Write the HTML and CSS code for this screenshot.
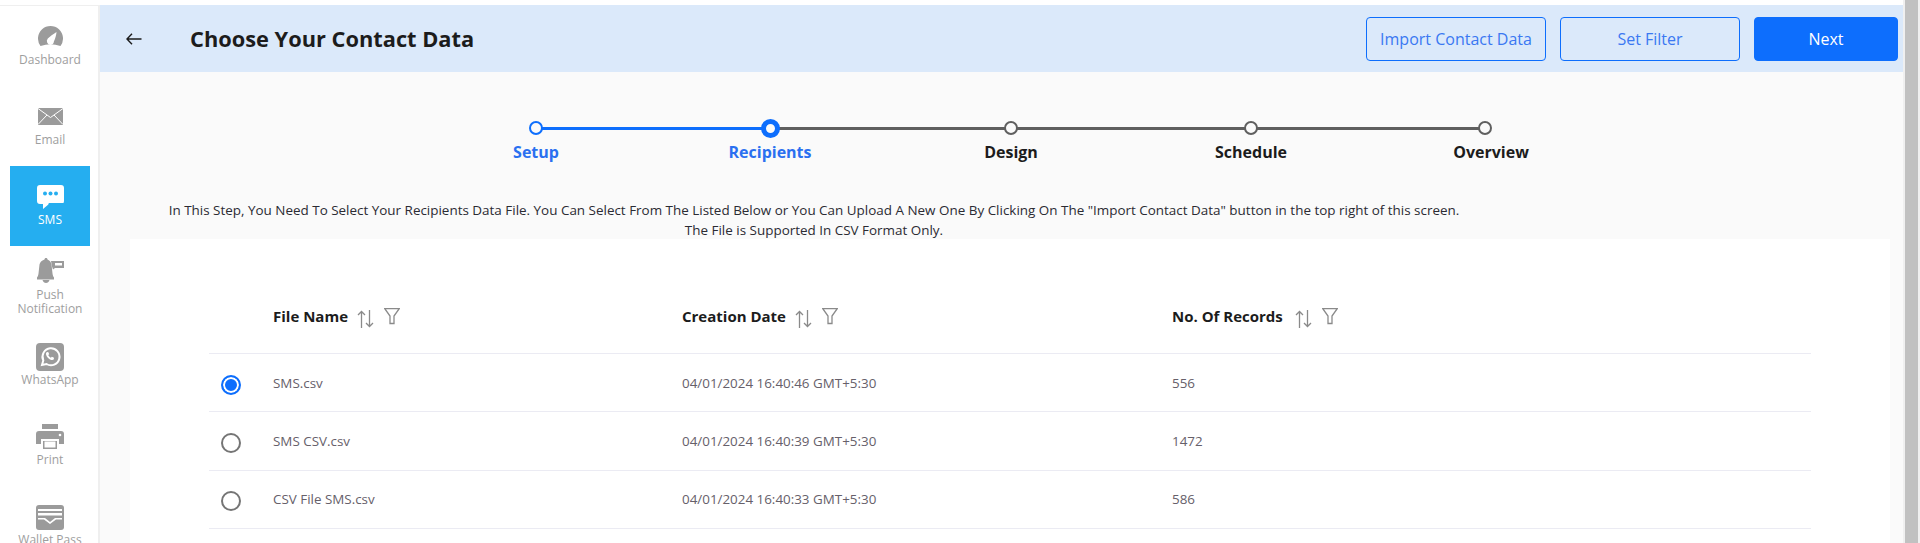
FILE: index.html
```html
<!DOCTYPE html>
<html lang="en">
<head>
<meta charset="utf-8">
<title>Choose Your Contact Data</title>
<link rel="stylesheet" href="styles.css">
</head>
<body>
<div class="app">
  <nav class="sidebar">
    <a class="nav-item nav-dash">
      <svg class="nav-icon" width="25" height="20" viewBox="0 0 25 20"><path fill="#9b9b9b" d="M2.500 20A12.500 12.500 0 1 1 22.500 20Q12.500 16.500 2.500 20z"/><path fill="#fff" d="M18.500 6c-.2 3-1 5.800-2.600 9.500a3.800 3.800 0 0 1-3.500 3.400 3.800 3.800 0 0 1-2.600-6.300C12 10.500 15 8.300 18.500 6z"/></svg>
      <span>Dashboard</span>
    </a>
    <a class="nav-item nav-email">
      <svg class="nav-icon" width="25" height="17" viewBox="0 0 25 17"><rect width="25" height="17" fill="#9b9b9b"/><path fill="none" stroke="#fff" stroke-width="1" d="M0 .5l12.500 9L25 .5M0 16.500l9-9.500M25 16.500l-9-9.500"/></svg>
      <span>Email</span>
    </a>
    <a class="nav-item nav-sms active">
      <svg class="nav-icon" width="27" height="24" viewBox="0 0 27 24"><path fill="#fff" d="M3 0h21a3 3 0 0 1 3 3v13a3 3 0 0 1-3 3H12l-6 5v-5H3a3 3 0 0 1-3-3V3a3 3 0 0 1 3-3z"/><circle cx="8" cy="8.500" r="2" fill="#25aef0"/><circle cx="13.500" cy="8.500" r="2" fill="#25aef0"/><circle cx="19" cy="8.500" r="2" fill="#25aef0"/><path fill="#25aef0" d="M12 18h15v1.400H11z"/></svg>
      <span>SMS</span>
    </a>
    <a class="nav-item nav-push">
      <svg class="nav-icon" width="27" height="25" viewBox="0 0 27 25"><path fill="#9b9b9b" d="M9 0c1 0 1.500.6 1.500 1.500 2.500 1 3.500 2.700 4 5l1 9c.2 2 .8 3 1.500 4v2H0v-2c.7-1 1.300-2 1.500-4l1-9c.5-2.300 2-4 5-5C7.500.6 8 0 9 0zM5.500 22h7c-.5 1.800-2 3-3.500 3s-3-1.200-3.500-3z"/><path fill="#9b9b9b" d="M14 3h13v7H18l-2 1.500-1-3z"/><path fill="#fff" d="M18 5h7v2.500h-7z"/></svg>
      <span>Push Notification</span>
    </a>
    <a class="nav-item nav-whatsapp">
      <svg class="nav-icon" width="28" height="28" viewBox="0 0 28 28"><rect width="28" height="28" rx="4" fill="#9b9b9b"/><path fill="none" stroke="#fff" stroke-width="2" d="M6 22l1.300-4.600A8.500 8.500 0 1 1 10.500 21z"/><path fill="#fff" d="M11 9c-.8.500-1.200 1.500-.9 2.700.6 2.300 2.900 4.600 5.200 5.200 1.300.3 2.200-.1 2.700-1l-.3-1.300-1.900-.8-.9 1c-1.200-.5-2.200-1.500-2.700-2.700l1-.9-.8-1.900z"/></svg>
      <span>WhatsApp</span>
    </a>
    <a class="nav-item nav-print">
      <svg class="nav-icon" width="28" height="25" viewBox="0 0 28 25"><path fill="#9b9b9b" d="M6 0h16v5H6zM3 7h22a3 3 0 0 1 3 3v10h-5v-5H5v5H0V10a3 3 0 0 1 3-3zM7 17h14v8H7z"/><path fill="#fff" d="M8.500 17.500h11v6h-11z"/><circle cx="24" cy="11" r="1.300" fill="#fff"/></svg>
      <span>Print</span>
    </a>
    <a class="nav-item nav-wallet">
      <svg class="nav-icon" width="28" height="25" viewBox="0 0 28 25"><rect width="28" height="25" rx="3" fill="#9b9b9b"/><path fill="#fff" d="M2 4h24v2H2zM2 8h24v2.500H2zM2 13h7l5 4 5-4h7v1.500h-6l-6 4.500-6-4.500H2z"/></svg>
      <span>Wallet Pass</span>
    </a>
  </nav>
  <main class="main">
    <header class="topbar">
      <svg class="back" width="16" height="12" viewBox="0 0 16 12"><path fill="none" stroke="#1c1c1c" stroke-width="1.400" d="M15.500 6H1M6 .8L1 6l5 5.200"/></svg>
      <h1 class="title">Choose Your Contact Data</h1>
      <div class="actions">
        <button class="btn outline">Import Contact Data</button>
        <button class="btn outline">Set Filter</button>
        <button class="btn solid">Next</button>
      </div>
    </header>
    <div class="content">
      <ol class="stepper">
        <li class="step done"><i class="dot"></i><b>Setup</b></li>
        <li class="step current"><i class="dot"></i><b>Recipients</b></li>
        <li class="step"><i class="dot"></i><b>Design</b></li>
        <li class="step short"><i class="dot"></i><b>Schedule</b></li>
        <li class="step last"><i class="dot"></i><b>Overview</b></li>
      </ol>
      <p class="intro">In This Step, You Need To Select Your Recipients Data File. You Can Select From The Listed Below or You Can Upload A New One By Clicking On The "Import Contact Data" button in the top right of this screen.<br>The File is Supported In CSV Format Only.</p>
      <section class="card">
        <div class="row head">
          <div></div>
          <div class="th">File Name
            <svg class="sort" width="17" height="18" viewBox="0 0 17 18"><path fill="none" stroke="#8a8a8a" stroke-width="1.300" d="M4.500 18V1.500M1 5l3.500-3.500L8 5M12.500 0v16.500M9 13l3.500 3.500L16 13"/></svg>
            <svg class="filter" width="16" height="17" viewBox="0 0 16 17"><path fill="none" stroke="#8a8a8a" stroke-width="1.300" d="M.8.700h14.400L10 8v7.500l-4 0V8z"/></svg>
          </div>
          <div class="th">Creation Date
            <svg class="sort" width="17" height="18" viewBox="0 0 17 18"><path fill="none" stroke="#8a8a8a" stroke-width="1.300" d="M4.500 18V1.500M1 5l3.500-3.500L8 5M12.500 0v16.500M9 13l3.500 3.500L16 13"/></svg>
            <svg class="filter" width="16" height="17" viewBox="0 0 16 17"><path fill="none" stroke="#8a8a8a" stroke-width="1.300" d="M.8.700h14.400L10 8v7.500l-4 0V8z"/></svg>
          </div>
          <div class="th th-wide">No. Of Records
            <svg class="sort" width="17" height="18" viewBox="0 0 17 18"><path fill="none" stroke="#8a8a8a" stroke-width="1.300" d="M4.500 18V1.500M1 5l3.500-3.500L8 5M12.500 0v16.500M9 13l3.500 3.500L16 13"/></svg>
            <svg class="filter" width="16" height="17" viewBox="0 0 16 17"><path fill="none" stroke="#8a8a8a" stroke-width="1.300" d="M.8.700h14.400L10 8v7.500l-4 0V8z"/></svg>
          </div>
        </div>
        <div class="row"><div><i class="radio on"></i></div><div>SMS.csv</div><div>04/01/2024 16:40:46 GMT+5:30</div><div>556</div></div>
        <div class="row"><div><i class="radio"></i></div><div>SMS CSV.csv</div><div>04/01/2024 16:40:39 GMT+5:30</div><div>1472</div></div>
        <div class="row"><div><i class="radio"></i></div><div>CSV File SMS.csv</div><div>04/01/2024 16:40:33 GMT+5:30</div><div>586</div></div>
      </section>
    </div>
  </main>
  <div class="scrollbar"></div>
</div>
</body>
</html>
```
FILE: styles.css
```css
* { box-sizing: border-box; }
html, body { margin: 0; height: 100%; overflow: hidden; }
body { background: #fff; font-family: "Open Sans", sans-serif; color: #1c1c1c; }
.app { display: flex; height: 543px; overflow: hidden; }

.sidebar { width: 100px; flex: none; margin-top: 5px; border-top: 1px solid #efefef; border-right: 2px solid #efefef; background: #fff; display: flex; flex-direction: column; align-items: flex-start; padding-left: 10px; }
.nav-item { width: 80px; height: 80px; flex: none; display: flex; flex-direction: column; align-items: center; color: #9e9e9e; font-size: 12px; line-height: 14px; text-align: center; }
.nav-icon { display: block; flex: none; }
.nav-dash { padding-top: 20px; gap: 7px; }
.nav-email { padding-top: 22px; gap: 8px; }
.nav-sms { padding-top: 19px; gap: 4px; }
.nav-push { padding-top: 12px; gap: 5px; }
.nav-whatsapp { padding-top: 17px; gap: 2px; }
.nav-print { padding-top: 18px; gap: 4px; }
.nav-wallet { padding-top: 19px; gap: 3px; }
.nav-item.active { background: #25aef0; color: #fff; }

.main { flex: 1; min-width: 0; margin-top: 5px; display: flex; flex-direction: column; background: #fafafa; }
.topbar { height: 67px; flex: none; background: #dbe9fa; display: flex; align-items: center; padding: 0 5px 0 26px; }
.back { flex: none; }
.title { margin: 0 0 0 48px; font-size: 21.800px; font-weight: 700; color: #1c1c1c; }
.actions { margin-left: auto; display: flex; gap: 14px; }
.btn { width: 180px; height: 44px; border-radius: 4px; border: 1px solid #0d6efd; font: 400 16px "Open Sans", sans-serif; background: transparent; color: #3a78f2; padding: 0; }
.btn.solid { width: 144px; background: #0d6efd; color: #fff; }

.content { flex: 1; min-height: 0; display: flex; flex-direction: column; padding: 0 13px 0 30px; }
.stepper { list-style: none; margin: 49px 0 0 399px; padding: 0; display: flex; height: 14px; }
.step { position: relative; width: 240px; flex: none; }
.step.done { width: 234px; }
.step.current { width: 241px; }
.step.short { width: 234px; }
.step.last { width: 14px; }
.step b { position: absolute; top: 20px; left: 7px; transform: translateX(-50%); font-size: 16px; font-weight: 700; line-height: 22px; white-space: nowrap; }
.step.last b { left: 13px; }
.step::before { content: ""; position: absolute; top: 5.500px; left: 7px; width: 100%; height: 3px; background: #5f5f5f; }
.step.last::before { display: none; }
.step.done::before { background: #0d6efd; }
.step.done b, .step.current b { color: #2a70f0; }
.dot { position: relative; width: 14px; height: 14px; border-radius: 50%; border: 2px solid #5f5f5f; background: #fafafa; display: block; }
.done .dot { border-color: #0d6efd; }
.current .dot { width: 19px; height: 19px; margin: -2.500px 0 0 -2.500px; border: 5px solid #0d6efd; }

.intro { margin: 65px 0 0; width: 1368px; font-size: 13.450px; line-height: 20px; text-align: center; color: #2b2b33; }
.card { background: #fff; flex: 1; min-height: 0; margin-top: -1px; padding: 0 79px; }
.row { display: grid; grid-template-columns: 64px 409px 490px 1fr; align-items: center; height: 58.330px; border-bottom: 1px solid #ebebf3; font-size: 13.400px; color: #66606a; }
.row.head { height: 115px; padding-top: 40px; font-size: 15px; color: #1c1c1c; }
.th { font-weight: 700; display: flex; align-items: center; }
.sort { margin: 5px 0 0 9px; }
.filter { margin: 0 0 0 10px; }
.th-wide .sort { margin-left: 12px; }
.radio { display: block; width: 20px; height: 20px; margin: 4px 0 0 12px; border-radius: 50%; border: 2px solid #757575; }
.radio.on { border-color: #0d6efd; background: #0d6efd; box-shadow: inset 0 0 0 2px #fff; }

.scrollbar { width: 17px; flex: none; background: #c1c1c1; border-left: 2px solid #f0f0f0; border-right: 2px solid #f0f0f0; }
```
